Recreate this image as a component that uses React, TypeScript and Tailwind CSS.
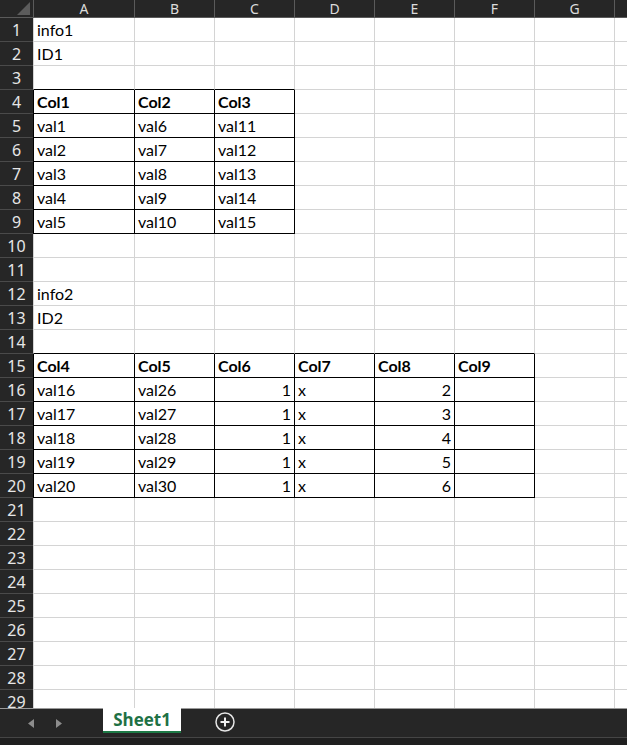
import { Fragment } from "react";

const COLS = ["A", "B", "C", "D", "E", "F", "G", "H"];
const COL_W = ["w-[102px]", "w-[80px]", "w-[80px]", "w-[80px]", "w-[80px]", "w-[80px]", "w-[80px]", "w-[80px]"];

type Cell = { v: string; bold?: boolean; num?: boolean };

// sheet contents keyed by "row-col"
const cells: Record<string, Cell> = {
  "1-0": { v: "info1" },
  "2-0": { v: "ID1" },
  "12-0": { v: "info2" },
  "13-0": { v: "ID2" },
};

["Col1", "Col2", "Col3"].forEach((h, c) => (cells[`4-${c}`] = { v: h, bold: true }));
for (let i = 0; i < 5; i++) {
  cells[`${5 + i}-0`] = { v: `val${1 + i}` };
  cells[`${5 + i}-1`] = { v: `val${6 + i}` };
  cells[`${5 + i}-2`] = { v: `val${11 + i}` };
}

["Col4", "Col5", "Col6", "Col7", "Col8", "Col9"].forEach((h, c) => (cells[`15-${c}`] = { v: h, bold: true }));
for (let i = 0; i < 5; i++) {
  const r = 16 + i;
  cells[`${r}-0`] = { v: `val${16 + i}` };
  cells[`${r}-1`] = { v: `val${26 + i}` };
  cells[`${r}-2`] = { v: "1", num: true };
  cells[`${r}-3`] = { v: "x" };
  cells[`${r}-4`] = { v: String(2 + i), num: true };
}

function inTable(r: number, c: number) {
  if (r >= 4 && r <= 9 && c >= 0 && c <= 2) return true;
  if (r >= 15 && r <= 20 && c >= 0 && c <= 5) return true;
  return false;
}

const ROWS = Array.from({ length: 29 }, (_, i) => i + 1);

function SheetRow({ r }: { r: number }) {
  return (
    <div className="flex h-[24px] shrink-0">
      <div className="w-[33px] shrink-0 bg-[#262626] border-b border-[#4a4a4a] flex items-center justify-center text-[16px] text-[#e6e6e6] font-['Noto_Sans',sans-serif]">
        {r}
      </div>
      {COLS.map((_, c) => {
        const cell = cells[`${r}-${c}`];
        const bBlack = inTable(r, c) || inTable(r + 1, c);
        const rBlack = inTable(r, c) || inTable(r, c + 1);
        const lBlack = c === 0 && inTable(r, 0);
        return (
          <div
            key={c}
            className={[
              "shrink-0 bg-white border-b border-r flex items-center px-[3px] pt-[1px] text-[16px] text-black font-['Lato',sans-serif] overflow-hidden whitespace-nowrap",
              COL_W[c],
              c === 0 ? "border-l" : "",
              c === 0 ? (lBlack ? "border-l-black" : "border-l-[#d4d4d4]") : "",
              bBlack ? "border-b-black" : "border-b-[#d4d4d4]",
              rBlack ? "border-r-black" : "border-r-[#d4d4d4]",
              cell?.num ? "justify-end" : "",
              cell?.bold ? "font-bold" : "",
            ].join(" ")}
          >
            {cell?.v}
          </div>
        );
      })}
    </div>
  );
}

export default function App() {
  return (
    <div className="w-[627px] h-[745px] overflow-hidden flex flex-col bg-[#262626]">
      {/* grid area */}
      <div className="h-[708px] shrink-0 overflow-hidden flex flex-col bg-white">
        <div className="flex h-[18px] shrink-0 bg-[#262626] border-b border-[#5a5a5a] font-['Noto_Sans',sans-serif] text-[14px] leading-[17px] text-[#dcdcdc]">
          <div className="w-[34px] shrink-0 relative border-r border-[#5a5a5a]">
            <svg className="absolute right-[3px] bottom-[2px]" width="13" height="13" viewBox="0 0 13 13">
              <polygon points="13,0 13,13 0,13" fill="#5c5c5c" />
            </svg>
          </div>
          {COLS.map((l, c) => (
            <Fragment key={l}>
              <div
                className={[
                  "shrink-0 h-[17px] flex items-start justify-center border-r border-[#5a5a5a]",
                  c === 0 ? "w-[101px]" : COL_W[c],
                ].join(" ")}
              >
                {/* column H is scrolled mostly out of view, its letter isn't visible */}
                {l === "H" ? null : l}
              </div>
            </Fragment>
          ))}
        </div>
        {ROWS.map((r) => (
          <SheetRow key={r} r={r} />
        ))}
      </div>

      {/* sheet tabs */}
      <div className="h-[29px] shrink-0 flex border-t border-[#9a9a9a] bg-[#262626]">
        <div className="w-[103px] flex items-center">
          <svg className="ml-[28px]" width="6" height="9" viewBox="0 0 6 9">
            <polygon points="6,0 6,9 0,4.5" fill="#8c8c8c" />
          </svg>
          <svg className="ml-[22px]" width="6" height="9" viewBox="0 0 6 9">
            <polygon points="0,0 0,9 6,4.5" fill="#8c8c8c" />
          </svg>
        </div>
        <div className="w-[78px] h-[25px] -mt-px bg-white border-b-2 border-[#1d7a46] flex items-center justify-center font-['Open_Sans',sans-serif] font-bold text-[17px] text-[#1e7145]">
          Sheet1
        </div>
        <div className="flex items-center ml-[34px] -mt-[2px]">
          <svg width="20" height="20" viewBox="0 0 20 20">
            <circle cx="10" cy="10" r="9" fill="none" stroke="#e6e6e6" strokeWidth="1.5" />
            <path d="M10 5.5v9M5.5 10h9" stroke="#f2f2f2" strokeWidth="2" />
          </svg>
        </div>
      </div>
      <div className="flex-1 border-t border-[#454545] bg-[#1f1f1f]" />
    </div>
  );
}
